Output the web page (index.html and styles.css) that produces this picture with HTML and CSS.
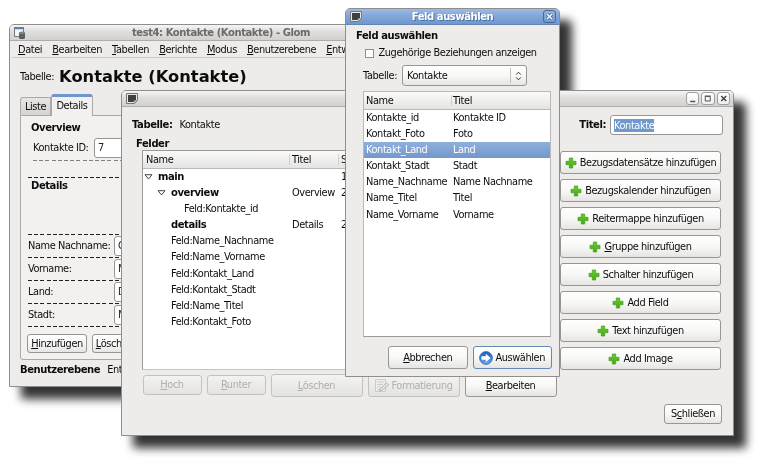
FILE: index.html
```html
<!DOCTYPE html>
<html lang="de">
<head>
<meta charset="utf-8">
<title>Glom</title>
<link rel="stylesheet" href="styles.css">
</head>
<body>
<svg class="defs" width="0" height="0">
  <defs>
    <linearGradient id="green" x1="0" y1="0" x2="0" y2="1"><stop offset="0" stop-color="#62cf2c"/><stop offset="1" stop-color="#4aa916"/></linearGradient>
    <linearGradient id="blue" x1="0" y1="0" x2="0" y2="1"><stop offset="0" stop-color="#1c5cba"/><stop offset="1" stop-color="#65a9ee"/></linearGradient>
    <symbol id="plus" viewBox="0 0 12 12"><path d="M4.300 1h3.400v3.300h3.300v3.400H7.700V11H4.300V7.700H1V4.300h3.300z" fill="url(#green)" stroke="#4a9a20" stroke-width=".7" stroke-linejoin="round"/></symbol>
    <symbol id="win" viewBox="0 0 12 11"><path d="M.5.5h11v7l-3 3h-8z" fill="#e9e9e4" stroke="#77776f"/><path d="M2 2h8v5L7.500 9H2z" fill="#3d423f"/><path d="M8 10V7.500h3" fill="#bbb" stroke="#888" stroke-width=".6"/></symbol>
  </defs>
</svg>
<div class="desktop">

  <section class="window main">
    <header class="titlebar">
      <svg class="appicon" viewBox="0 0 12 12"><path d="M.5.5h9v9h-9z" fill="#f4f4f2" stroke="#77797a"/><path d="M0 0h10v2.200H0z" fill="#5583c0"/><path d="M5 6v4.500c0 2 6 2 6 0V6z" fill="#4c5557"/><ellipse cx="8" cy="6" rx="3" ry="1.500" fill="#79827f"/><path d="M5 8.500c1 1.500 5 1.500 6 0" stroke="#879090" stroke-width=".6" fill="none"/></svg>
      <h1>test4: Kontakte (Kontakte) - Glom</h1>
    </header>
    <nav class="menubar"><span><u>D</u>atei</span><span><u>B</u>earbeiten</span><span><u>T</u>abellen</span><span><u>B</u>erichte</span><span><u>M</u>odus</span><span><u>B</u>enutzerebene</span><span><u>E</u>ntwickler</span></nav>
    <div class="heading"><span>Tabelle:</span><strong>Kontakte (Kontakte)</strong></div>
    <div class="tabs"><span class="tab">Liste</span><span class="tab active">Details</span></div>
    <div class="page">
      <h2 class="group">Overview</h2>
      <div class="row id"><label>Kontakte ID:</label><span class="entry">7</span></div>
      <div class="dash faint"></div>
      <div class="dash second"></div>
      <h2 class="group details">Details</h2>
      <div class="fields">
        <div class="row"><label>Name Nachname:</label><span class="entry">Glom</span></div>
        <div class="row"><label>Vorname:</label><span class="entry">Murray</span></div>
        <div class="row"><label>Land:</label><span class="entry">Deutschland</span></div>
        <div class="row"><label>Stadt:</label><span class="entry">München</span></div>
      </div>
      <div class="dash last"></div>
      <div class="actions"><button><span><u>H</u>inzufügen</span></button><button class="delete"><span><u>L</u>öschen</span></button></div>
    </div>
    <footer class="status"><strong>Benutzerebene</strong><span>Entwickler</span></footer>
  </section>

  <section class="window layout">
    <header class="titlebar">
      <svg class="winicon"><use href="#win"/></svg>
      <div class="controls">
        <i><svg viewBox="0 0 11 11"><path d="M3 8.500h5" stroke="#555" stroke-width="1.400"/></svg></i>
        <i><svg viewBox="0 0 11 11"><path d="M3 3.500h5v4.500H3zM2.500 3h6" fill="none" stroke="#555"/></svg></i>
        <i><svg viewBox="0 0 11 11"><path d="M3 3l5 5M8 3L3 8" stroke="#444" stroke-width="1.500"/></svg></i>
      </div>
    </header>
    <div class="toprow"><strong>Tabelle:</strong><span>Kontakte</span><strong class="tlabel">Titel:</strong><span class="titleentry"><mark>Kontakte</mark></span></div>
    <div class="columns">
      <div class="left">
        <strong class="felder">Felder</strong>
        <div class="tree">
          <div class="trow head"><span>Name</span><span>Titel</span><span>S</span></div>
          <div class="trow l0"><b><svg class="exp" viewBox="0 0 9 6"><path d="M1 .7h7L4.500 5z" fill="#fff" stroke="#333" stroke-width=".9"/></svg>main</b><span></span><span>1</span></div>
          <div class="trow l1"><b><svg class="exp" viewBox="0 0 9 6"><path d="M1 .7h7L4.500 5z" fill="#fff" stroke="#333" stroke-width=".9"/></svg>overview</b><span>Overview</span><span>2</span></div>
          <div class="trow l2"><span>Feld:Kontakte_id</span></div>
          <div class="trow l3"><b>details</b><span>Details</span><span>2</span></div>
          <div class="trow l3"><span>Feld:Name_Nachname</span></div>
          <div class="trow l3"><span>Feld:Name_Vorname</span></div>
          <div class="trow l3"><span>Feld:Kontakt_Land</span></div>
          <div class="trow l3"><span>Feld:Kontakt_Stadt</span></div>
          <div class="trow l3"><span>Feld:Name_Titel</span></div>
          <div class="trow l3"><span>Feld:Kontakt_Foto</span></div>
        </div>
        <div class="treebuttons">
          <button class="off small"><span><u>H</u>och</span></button>
          <button class="off small"><span><u>R</u>unter</span></button>
          <button class="off"><span><u>L</u>öschen</span></button>
          <button class="off fmt"><svg class="edit" viewBox="0 0 15 15"><path d="M1.500 1.500h10v12h-10z" fill="#eee" stroke="#ccc"/><path d="M3 4h7M3 6.500h6M3 9h4M3 11.500h3" stroke="#ccc"/><path d="M6 11l6.500-6 2 2-6.500 5.500-2.500.500z" fill="#e4e4e2" stroke="#aaa" stroke-width=".8"/></svg><span>Formatierung</span></button>
          <button><span><u>B</u>earbeiten</span></button>
        </div>
      </div>
      <div class="right">
        <button><svg class="plus"><use href="#plus"/></svg><span>Bezugsdatensätze hinzufügen</span></button>
        <button><svg class="plus"><use href="#plus"/></svg><span>Bezugskalender hinzufügen</span></button>
        <button><svg class="plus"><use href="#plus"/></svg><span>Reitermappe hinzufügen</span></button>
        <button><svg class="plus"><use href="#plus"/></svg><span><u>G</u>ruppe hinzufügen</span></button>
        <button><svg class="plus"><use href="#plus"/></svg><span>Schalter hinzufügen</span></button>
        <button><svg class="plus"><use href="#plus"/></svg><span>Add Field</span></button>
        <button><svg class="plus"><use href="#plus"/></svg><span>Text hinzufügen</span></button>
        <button><svg class="plus"><use href="#plus"/></svg><span>Add Image</span></button>
      </div>
    </div>
    <div class="closerow"><button><span>S<u>c</u>hließen</span></button></div>
  </section>

  <section class="window dialog">
    <header class="titlebar">
      <svg class="winicon"><use href="#win"/></svg>
      <h1>Feld auswählen</h1>
      <i class="x"><svg viewBox="0 0 11 11"><path d="M3 3l5 5M8 3L3 8" stroke="#3f5f8c" stroke-width="2.800"/><path d="M3 3l5 5M8 3L3 8" stroke="#fff" stroke-width="1.500"/></svg></i>
    </header>
    <div class="dbody">
      <strong class="dhead">Feld auswählen</strong>
      <div class="check"><i></i><span>Zugehörige Beziehungen anzeigen</span></div>
      <div class="combo"><label>Tabelle:</label><span class="select"><span>Kontakte</span><i><svg viewBox="0 0 7 10"><path d="M1.200 3.600L3.500 1.200l2.300 2.400M1.200 6.400l2.300 2.400 2.300-2.400" fill="none" stroke="#333"/></svg></i></span></div>
      <div class="list">
        <div class="lrow head"><span>Name</span><span>Titel</span></div>
        <div class="lrow"><span>Kontakte_id</span><span>Kontakte ID</span></div>
        <div class="lrow"><span>Kontakt_Foto</span><span>Foto</span></div>
        <div class="lrow selected"><span>Kontakt_Land</span><span>Land</span></div>
        <div class="lrow"><span>Kontakt_Stadt</span><span>Stadt</span></div>
        <div class="lrow"><span>Name_Nachname</span><span>Name Nachname</span></div>
        <div class="lrow"><span>Name_Titel</span><span>Titel</span></div>
        <div class="lrow"><span>Name_Vorname</span><span>Vorname</span></div>
      </div>
      <div class="dbuttons">
        <button><span><u>A</u>bbrechen</span></button>
        <button class="default"><svg class="go" viewBox="0 0 14 14"><circle cx="7" cy="7" r="6.400" fill="url(#blue)" stroke="#2a66b8" stroke-width=".8"/><path d="M2.500 5.300h4.300V2.800L11.600 7l-4.800 4.200V8.700H2.500z" fill="#fff"/></svg><span>Auswählen</span></button>
      </div>
    </div>
  </section>
</div>
</body>
</html>
```
FILE: styles.css
```css
* { box-sizing: border-box; }
body {
  margin: 0;
  width: 761px;
  height: 463px;
  overflow: hidden;
  background: #fff;
  font: 9.8px/14px "DejaVu Sans", sans-serif;
  letter-spacing: -.41px;
  color: #0c0c0c;
}
.defs { position: absolute; }
svg { flex: none; }
h1, h2 { margin: 0; font-size: inherit; }
strong, b, h1, h2 { font-weight: bold; font-size: 10px; letter-spacing: -.42px; }
i { font-style: normal; }
u { text-underline-offset: 1px; text-decoration-thickness: 1px; }

.desktop {
  position: relative;
  width: 761px;
  height: 463px;
  filter: drop-shadow(12px 12px 5px rgba(0, 0, 0, .8));
}
.window {
  position: absolute;
  overflow: hidden;
  white-space: nowrap;
  background: #edeceb;
  border: 1px solid #8f8e8c;
  border-radius: 5px 5px 0 0;
}
.main { left: 9px; top: 24px; width: 408px; height: 363px; }
.layout { left: 121px; top: 90px; width: 613px; height: 346px; }
.dialog { left: 345px; top: 8px; width: 215px; height: 369px; }

.titlebar {
  display: flex;
  align-items: center;
  height: 16px;
  padding-left: 4px;
  background: linear-gradient(#f5f5f4, #dfdedd 45%, #d2d1d0);
  border-bottom: 1px solid #adacaa;
}
.titlebar h1 { flex: 1; text-align: center; }
.winicon { width: 12px; height: 11px; }
.appicon { width: 12px; height: 12px; }
.main .titlebar h1 { color: #6b6a69; }

button {
  display: flex;
  align-items: center;
  justify-content: center;
  gap: 2px;
  padding: 0;
  font: inherit;
  letter-spacing: inherit;
  color: #0c0c0c;
  border: 1px solid #979694;
  border-radius: 3px;
  background: linear-gradient(#fff, #f8f8f7 50%, #e6e5e4);
}
button.off { color: #b0afad; border-color: #c3c2c0; background: linear-gradient(#f3f3f2, #e4e3e2); }

/* main window */
.menubar {
  display: flex;
  height: 17px;
  margin: 0 2px;
  padding-left: 6px;
  gap: 10.1px;
  line-height: 17px;
  border-bottom: 1px solid #cbcac8;
}
.heading { display: flex; align-items: center; height: 37px; margin-bottom: -1px; padding-left: 10px; gap: 5px; }
.heading strong { font-size: 16.3px; line-height: 20px; letter-spacing: 0; }
.tabs { display: flex; align-items: flex-end; height: 21px; padding-left: 10px; position: relative; z-index: 1; }
.tab { width: 31px; height: 18px; line-height: 18px; text-align: center; border: 1px solid #aaa9a7; border-bottom: 0; border-radius: 3px 0 0 0; background: linear-gradient(#e6e5e4, #d5d4d3); }
.tab.active { width: 42px; height: 22px; margin-bottom: -1px; line-height: 17px; border-top: 3px solid #6f95cc; border-radius: 3px 3px 0 0; background: #f2f1f0; }
.page { height: 245px; margin-left: 10px; border: 1px solid #aaa9a7; border-radius: 0 0 0 3px; background: #f2f1f0; padding-left: 7px; }
.group { height: 22px; padding: 5px 0 0 3px; }
.row { display: flex; align-items: center; }
.entry { height: 20px; padding: 0 3px; line-height: 18px; border: 1px solid #979694; border-radius: 3px; background: #fff; color: #222; flex: 1; }
.row.id { padding-left: 5px; height: 20px; }
.row.id label { width: 61px; }
.dash { height: 1px; background: repeating-linear-gradient(90deg, #222 0 4px, transparent 4px 6.200px); }
.dash.faint { margin: 2px 0 0 5px; opacity: .55; }
.dash.second { margin-top: 16px; }
.group.details { height: 56px; padding-top: 1px; }
.fields .row { height: 23px; background: repeating-linear-gradient(90deg, #222 0 4px, transparent 4px 6.200px) top / 100% 1px no-repeat; }
.fields label { width: 86px; }
.actions { display: flex; gap: 5px; margin: 7px 0 0 -1px; }
.actions button { width: 60px; height: 19px; }
.actions .delete { width: 45px; }
.status { display: flex; gap: 7px; padding: 3px 0 0 10px; }

/* layout window */
.controls { display: flex; gap: 2px; margin-left: auto; padding-right: 3px; }
.controls i { width: 13.500px; height: 13px; border: 1px solid #a1a09e; border-radius: 3px; background: linear-gradient(#fff, #eee); }
.controls svg, .x svg { display: block; width: 100%; height: 100%; }
.toprow { display: flex; align-items: center; height: 36px; padding: 0 10px; }
.toprow strong + span { margin-left: 7px; }
.toprow .tlabel { margin-left: auto; }
.toprow .titleentry { display: flex; align-items: center; width: 113px; height: 20px; margin-left: 4px; padding: 0 3px; border: 1px solid #979694; border-radius: 3px; background: #fff; }
.toprow mark { height: 13px; line-height: 13px; background: #6f98cc; color: #fff; }
.columns { display: flex; height: 262px; }
.left { width: 438px; padding-left: 10px; }
.felder { display: block; padding-left: 4px; height: 13px; line-height: 14px; margin-top: -6px; }
.tree { height: 220px; margin-left: 10px; width: 413px; border: 1px solid #9c9b99; border-bottom: 1px solid #c5c4c2; background: #fff; }
.trow { display: grid; grid-template-columns: 146px 49px 1fr; height: 16.100px; line-height: 16px; }
.trow > * { padding-left: 3px; }
.trow.head { height: 18px; line-height: 17px; padding: 0; background: linear-gradient(#fafaf9, #e5e4e3); border-bottom: 1px solid #bab9b7; }
.trow.head > * + *, .lrow.head > * + * { background: linear-gradient(#cfcecc, #cfcecc) 0 50% / 1px 11px no-repeat; }
.exp { width: 9px; height: 6px; margin-right: 5px; }
.trow.l0 > :first-child { padding-left: 1px; }
.trow.l1 > :first-child { padding-left: 14px; }
.trow.l2 > :first-child { padding-left: 41px; }
.trow.l3 > :first-child { padding-left: 28px; }
.treebuttons { display: flex; gap: 5px; margin: 4px 0 0 10.5px; }
.treebuttons button { width: 92px; height: 23px; }
.treebuttons button.small { width: 59px; height: 20px; margin-top: 1px; }
.edit { width: 15px; height: 15px; }
.right { display: flex; flex-direction: column; gap: 5px; padding-top: 8px; width: 161px; }
.right button { height: 23px; gap: 3px; }
.plus { width: 12px; height: 12px; }
.closerow { display: flex; justify-content: flex-end; padding-right: 11px; margin-top: -1px; }
.closerow button { width: 58px; height: 20px; }

/* field dialog */
.dialog .titlebar { background: linear-gradient(#9dbbe3, #85a9d9 40%, #7097cc); border-bottom-color: #6385b5; padding-right: 3px; }
.dialog .titlebar h1 { color: #fff; text-shadow: 1px 1px 0 #4d6f9f; }
.x { width: 13px; height: 13px; border: 1px solid #44679a; border-radius: 3px; }
.dhead { display: block; height: 14px; margin: 4px 0 0 10px; }
.check { display: flex; align-items: center; height: 20px; padding-left: 19px; gap: 4.500px; }
.check i { width: 9px; height: 9px; border: 1px solid #8f8e8c; background: #fff; }
.combo { display: flex; align-items: center; height: 25px; padding-left: 17px; }
.combo label { width: 39px; }
.select { display: flex; align-items: center; width: 125px; height: 21px; padding-left: 4px; border: 1px solid #979694; border-radius: 3px; background: linear-gradient(#fff, #f8f8f7 50%, #e6e5e4); }
.select i { display: flex; align-items: center; justify-content: center; width: 16px; height: 15px; margin-left: auto; border-left: 1px solid #c3c2c0; }
.select svg { width: 7px; height: 10px; }
.list { width: 188px; height: 246px; margin: 3px 0 0 17px; border: 1px solid #bab9b7; border-bottom-color: #9c9b99; background: #fff; }
.lrow { display: grid; grid-template-columns: 87px 1fr; height: 16.100px; line-height: 16px; }
.lrow > * { padding-left: 2px; }
.lrow.head { height: 18px; line-height: 17px; background: linear-gradient(#fafaf9, #e5e4e3); border-bottom: 1px solid #bab9b7; }
.lrow.selected { color: #fff; background: linear-gradient(#8fb0de, #7398ca); }
.dbuttons { display: flex; justify-content: flex-end; gap: 5px; padding: 9px 7px 0 0; }
.dbuttons button { width: 79.5px; height: 23px; }
.dbuttons button.default { border-color: #6488bb; }
.go { width: 14px; height: 14px; }
```
